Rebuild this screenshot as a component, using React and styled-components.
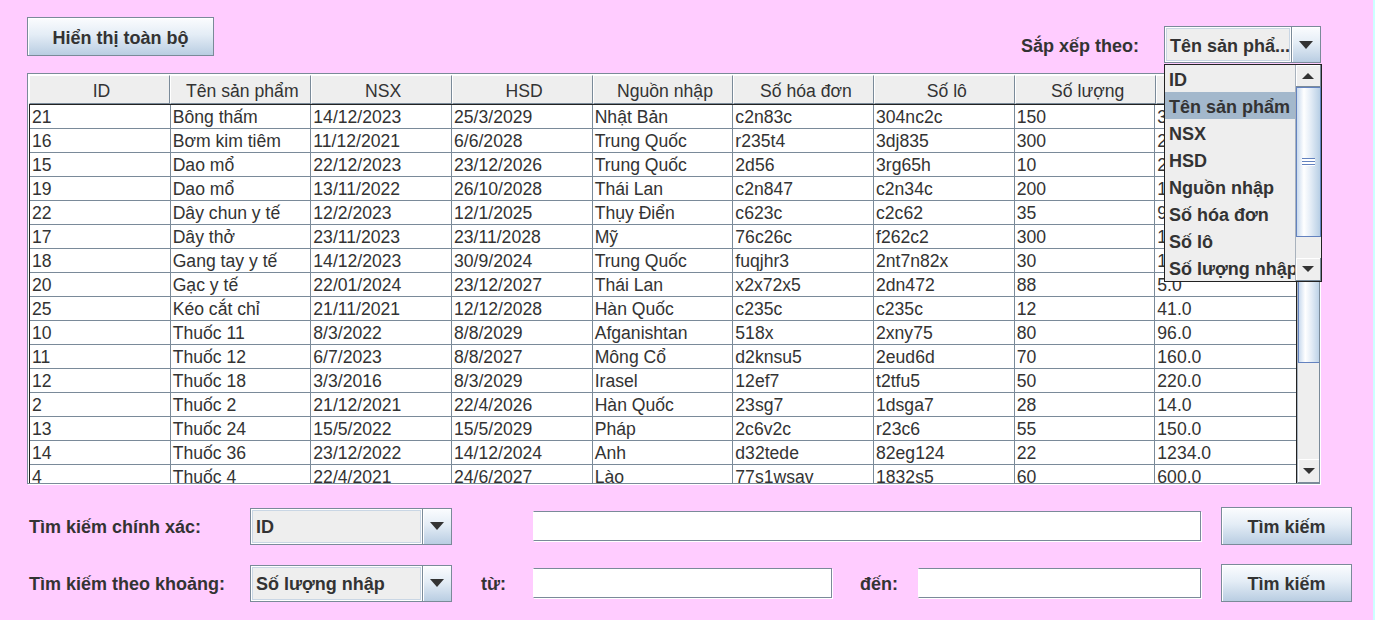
import React from "react";
import styled, { createGlobalStyle } from "styled-components";

const GlobalStyle = createGlobalStyle`
  body {
    margin: 0;
    background: #ccffff;
  }
`;

const Page = styled.div`
  width: 1373px;
  height: 620px;
  background: #ffccff;
  font-family: "Liberation Sans", Arial, sans-serif;
  color: #333333;
  overflow: hidden;
`;

const TopBar = styled.div`
  display: flex;
  justify-content: space-between;
  align-items: flex-start;
  height: 73px;
  padding: 0 52px 0 27px;
`;

const MetalButton = styled.button`
  width: ${(p) => p.$w}px;
  height: ${(p) => p.$h}px;
  margin-top: ${(p) => p.$mt || 0}px;
  margin-left: ${(p) => p.$ml || 0}px;
  padding: 3px 0 0;
  border: 1px solid #7a8a99;
  box-shadow: inset 1px 1px 0 #ffffff;
  background: linear-gradient(#fbfcfe 0%, #e4edf6 45%, #b9cde2 100%);
  font-family: "Liberation Sans", Arial, sans-serif;
  font-weight: bold;
  font-size: 18px;
  color: #333333;
  flex-shrink: 0;
`;

const SortGroup = styled.div`
  display: flex;
  align-items: center;
  gap: 25px;
  margin-top: 26px;
`;

const BoldLabel = styled.span`
  font-weight: bold;
  font-size: 18px;
  padding-top: 3px;
  width: ${(p) => (p.$w ? `${p.$w}px` : "auto")};
  margin-left: ${(p) => p.$ml || 0}px;
  flex-shrink: 0;
  white-space: nowrap;
`;

const Combo = styled.div`
  position: relative;
  display: flex;
  width: ${(p) => p.$w}px;
  height: ${(p) => p.$h}px;
  border: 1px solid #7a8a99;
  box-sizing: border-box;
  background: #eeeeee;
  flex-shrink: 0;
`;

const ComboValue = styled.div`
  flex: 1;
  display: flex;
  align-items: center;
  padding: 3px 0 0 5px;
  box-shadow: inset 0 0 0 1px #ffffff, inset 0 0 0 2px #c9d6e4;
  font-weight: bold;
  font-size: 18px;
  white-space: nowrap;
  overflow: hidden;
`;

const ComboArrow = styled.div`
  width: 28px;
  display: flex;
  align-items: center;
  justify-content: center;
  border-left: 1px solid #7a8a99;
  box-shadow: inset 1px 1px 0 #ffffff;
  background: linear-gradient(#fbfcfe 0%, #e4edf6 45%, #b9cde2 100%);
`;

const Triangle = styled.span`
  width: 0;
  height: 0;
  border-left: ${(p) => p.$size}px solid transparent;
  border-right: ${(p) => p.$size}px solid transparent;
  ${(p) =>
    p.$up
      ? `border-bottom: ${p.$tall}px solid #333333;`
      : `border-top: ${p.$tall}px solid #333333;`}
`;

const Popup = styled.div`
  position: absolute;
  top: calc(100% + 2px);
  left: -1px;
  width: 158px;
  height: 218px;
  box-sizing: border-box;
  border: 1px solid #222222;
  background: #eeeeee;
  display: flex;
  z-index: 10;
`;

const PopupList = styled.div`
  flex: 1;
  display: flex;
  flex-direction: column;
  overflow: hidden;
`;

const PopupItem = styled.div`
  height: 27px;
  flex-shrink: 0;
  display: flex;
  align-items: center;
  padding: 3px 0 0 4px;
  box-sizing: border-box;
  font-weight: bold;
  font-size: 18px;
  white-space: nowrap;
  background: ${(p) => (p.$selected ? "#a3b8cc" : "transparent")};
`;

const ScrollBar = styled.div`
  width: ${(p) => p.$w}px;
  display: flex;
  flex-direction: column;
  background: #eeeeee;
  border-left: 1px solid #a8b2bd;
  flex-shrink: 0;
`;

const ArrowBtn = styled.div`
  height: ${(p) => p.$h}px;
  flex-shrink: 0;
  display: flex;
  align-items: center;
  justify-content: center;
  background: #eeeeee;
  border-right: 1px solid #7a8a99;
  border-bottom: 1px solid #7a8a99;
  box-shadow: inset 1px 1px 0 #ffffff;
  box-sizing: border-box;
`;

const Thumb = styled.div`
  height: ${(p) => p.$h}px;
  flex-shrink: 0;
  box-sizing: border-box;
  border: 1px solid #6382bf;
  background: linear-gradient(to right, #c9daee 0%, #ffffff 30%, #e3ecf6 60%, #b8cfe5 100%);
  display: flex;
  align-items: center;
  justify-content: center;
`;

const Grip = styled.div`
  width: 13px;
  height: 8px;
  background: repeating-linear-gradient(#6382bf 0 1px, #ffffff 1px 3px);
`;

const Track = styled.div`
  flex: 1;
  background: #eeeeee;
`;

const Pane = styled.div`
  margin-left: 27px;
  width: 1293px;
  height: 411px;
  box-sizing: border-box;
  border: 1px solid #7a8a99;
  box-shadow: 1px 1px 0 #ffffff;
  padding: 1px 0 0 1px;
  background: #ffffff;
  display: grid;
  grid-template-columns: 1268px 1fr;
  grid-template-rows: 29px 1fr;
  overflow: hidden;
`;

const HeaderRow = styled.div`
  display: grid;
  grid-template-columns: repeat(9, 1fr);
  background: #eeeeee;
`;

const HeaderCell = styled.div`
  display: flex;
  align-items: center;
  justify-content: center;
  padding: 3px 0 0 4px;
  border-left: 1px solid #ffffff;
  border-top: 1px solid #ffffff;
  border-right: 1px solid #7a8a99;
  border-bottom: 1px solid #7a8a99;
  font-size: 17.6px;
  white-space: nowrap;
  overflow: hidden;
`;

const Corner = styled.div`
  background: #eeeeee;
`;

const Body = styled.div`
  border: 1px solid #222222;
  border-bottom: none;
  overflow: hidden;
`;

const Row = styled.div`
  display: grid;
  grid-template-columns: repeat(9, 1fr);
  height: 24px;
`;

const Cell = styled.div`
  display: flex;
  align-items: center;
  padding: 2px 0 0 2px;
  border-right: 1px solid #7a8a99;
  border-bottom: 1px solid #7a8a99;
  font-size: 17.6px;
  white-space: nowrap;
  overflow: hidden;
  &:last-child {
    border-right: none;
  }
`;

const Bottom = styled.div`
  display: flex;
  flex-direction: column;
  gap: 19px;
  margin-top: 23px;
  padding-left: 29px;
`;

const SearchRow = styled.div`
  display: flex;
  align-items: center;
  height: 38px;
`;

const Field = styled.div`
  width: ${(p) => p.$w}px;
  height: 30px;
  margin-left: ${(p) => p.$ml || 0}px;
  box-sizing: border-box;
  background: #ffffff;
  border: 1px solid #7a8a99;
  border-left-color: #ffffff;
  box-shadow: 1px 1px 0 #ffffff;
  flex-shrink: 0;
`;

const headers = ["ID", "Tên sản phẩm", "NSX", "HSD", "Nguồn nhập", "Số hóa đơn", "Số lô", "Số lượng", "Đơn giá"];

const rows = [
  ["21", "Bông thấm", "14/12/2023", "25/3/2029", "Nhật Bản", "c2n83c", "304nc2c", "150", "35.0"],
  ["16", "Bơm kim tiêm", "11/12/2021", "6/6/2028", "Trung Quốc", "r235t4", "3dj835", "300", "25.0"],
  ["15", "Dao mổ", "22/12/2023", "23/12/2026", "Trung Quốc", "2d56", "3rg65h", "10", "20.0"],
  ["19", "Dao mổ", "13/11/2022", "26/10/2028", "Thái Lan", "c2n847", "c2n34c", "200", "15.0"],
  ["22", "Dây chun y tế", "12/2/2023", "12/1/2025", "Thụy Điển", "c623c", "c2c62", "35", "90.0"],
  ["17", "Dây thở", "23/11/2023", "23/11/2028", "Mỹ", "76c26c", "f262c2", "300", "12.0"],
  ["18", "Gang tay y tế", "14/12/2023", "30/9/2024", "Trung Quốc", "fuqjhr3", "2nt7n82x", "30", "10.0"],
  ["20", "Gạc y tế", "22/01/2024", "23/12/2027", "Thái Lan", "x2x72x5", "2dn472", "88", "5.0"],
  ["25", "Kéo cắt chỉ", "21/11/2021", "12/12/2028", "Hàn Quốc", "c235c", "c235c", "12", "41.0"],
  ["10", "Thuốc 11", "8/3/2022", "8/8/2029", "Afganishtan", "518x", "2xny75", "80", "96.0"],
  ["11", "Thuốc 12", "6/7/2023", "8/8/2027", "Mông Cổ", "d2knsu5", "2eud6d", "70", "160.0"],
  ["12", "Thuốc 18", "3/3/2016", "8/3/2029", "Irasel", "12ef7", "t2tfu5", "50", "220.0"],
  ["2", "Thuốc 2", "21/12/2021", "22/4/2026", "Hàn Quốc", "23sg7", "1dsga7", "28", "14.0"],
  ["13", "Thuốc 24", "15/5/2022", "15/5/2029", "Pháp", "2c6v2c", "r23c6", "55", "150.0"],
  ["14", "Thuốc 36", "23/12/2022", "14/12/2024", "Anh", "d32tede", "82eg124", "22", "1234.0"],
  ["4", "Thuốc 4", "22/4/2021", "24/6/2027", "Lào", "77s1wsav", "1832s5", "60", "600.0"],
];

const sortOptions = ["ID", "Tên sản phẩm", "NSX", "HSD", "Nguồn nhập", "Số hóa đơn", "Số lô", "Số lượng nhập", "Đơn giá"];

function VScroll({ w, thumb, up = 22, down = 23 }) {
  return (
    <ScrollBar $w={w}>
      <ArrowBtn $h={up}>
        <Triangle $up $size={6} $tall={6} />
      </ArrowBtn>
      <Thumb $h={thumb}>
        <Grip />
      </Thumb>
      <Track />
      <ArrowBtn $h={down}>
        <Triangle $size={6} $tall={6} />
      </ArrowBtn>
    </ScrollBar>
  );
}

function ComboBox({ w, h, value, children }) {
  return (
    <Combo $w={w} $h={h}>
      <ComboValue>{value}</ComboValue>
      <ComboArrow>
        <Triangle $size={7} $tall={8} />
      </ComboArrow>
      {children}
    </Combo>
  );
}

export default function App() {
  return (
    <>
      <GlobalStyle />
      <Page>
        <TopBar>
          <MetalButton $w={187} $h={39} $mt={17}>Hiển thị toàn bộ</MetalButton>
          <SortGroup>
            <BoldLabel>Sắp xếp theo:</BoldLabel>
            <ComboBox w={157} h={37} value="Tên sản phẩ...">
              <Popup>
                <PopupList>
                  {sortOptions.map((o) => (
                    <PopupItem key={o} $selected={o === "Tên sản phẩm"}>{o}</PopupItem>
                  ))}
                </PopupList>
                <VScroll w={25} thumb={150} up={22} down={23} />
              </Popup>
            </ComboBox>
          </SortGroup>
        </TopBar>

        <Pane>
          <HeaderRow>
            {headers.map((h) => (
              <HeaderCell key={h}>{h}</HeaderCell>
            ))}
          </HeaderRow>
          <Corner />
          <Body>
            {rows.map((r, i) => (
              <Row key={i}>
                {r.map((c, j) => (
                  <Cell key={j}>{c}</Cell>
                ))}
              </Row>
            ))}
          </Body>
          <VScroll w={23} thumb={237} up={22} down={24} />
        </Pane>

        <Bottom>
          <SearchRow>
            <BoldLabel $w={221}>Tìm kiếm chính xác:</BoldLabel>
            <ComboBox w={202} h={37} value="ID" />
            <Field $w={668} $ml={81} />
            <MetalButton $w={131} $h={38} $ml={20}>Tìm kiếm</MetalButton>
          </SearchRow>
          <SearchRow>
            <BoldLabel $w={221}>Tìm kiếm theo khoảng:</BoldLabel>
            <ComboBox w={202} h={37} value="Số lượng nhập" />
            <BoldLabel $w={52} $ml={29}>từ:</BoldLabel>
            <Field $w={299} />
            <BoldLabel $w={58} $ml={28}>đến:</BoldLabel>
            <Field $w={283} />
            <MetalButton $w={131} $h={38} $ml={20}>Tìm kiếm</MetalButton>
          </SearchRow>
        </Bottom>
      </Page>
    </>
  );
}
